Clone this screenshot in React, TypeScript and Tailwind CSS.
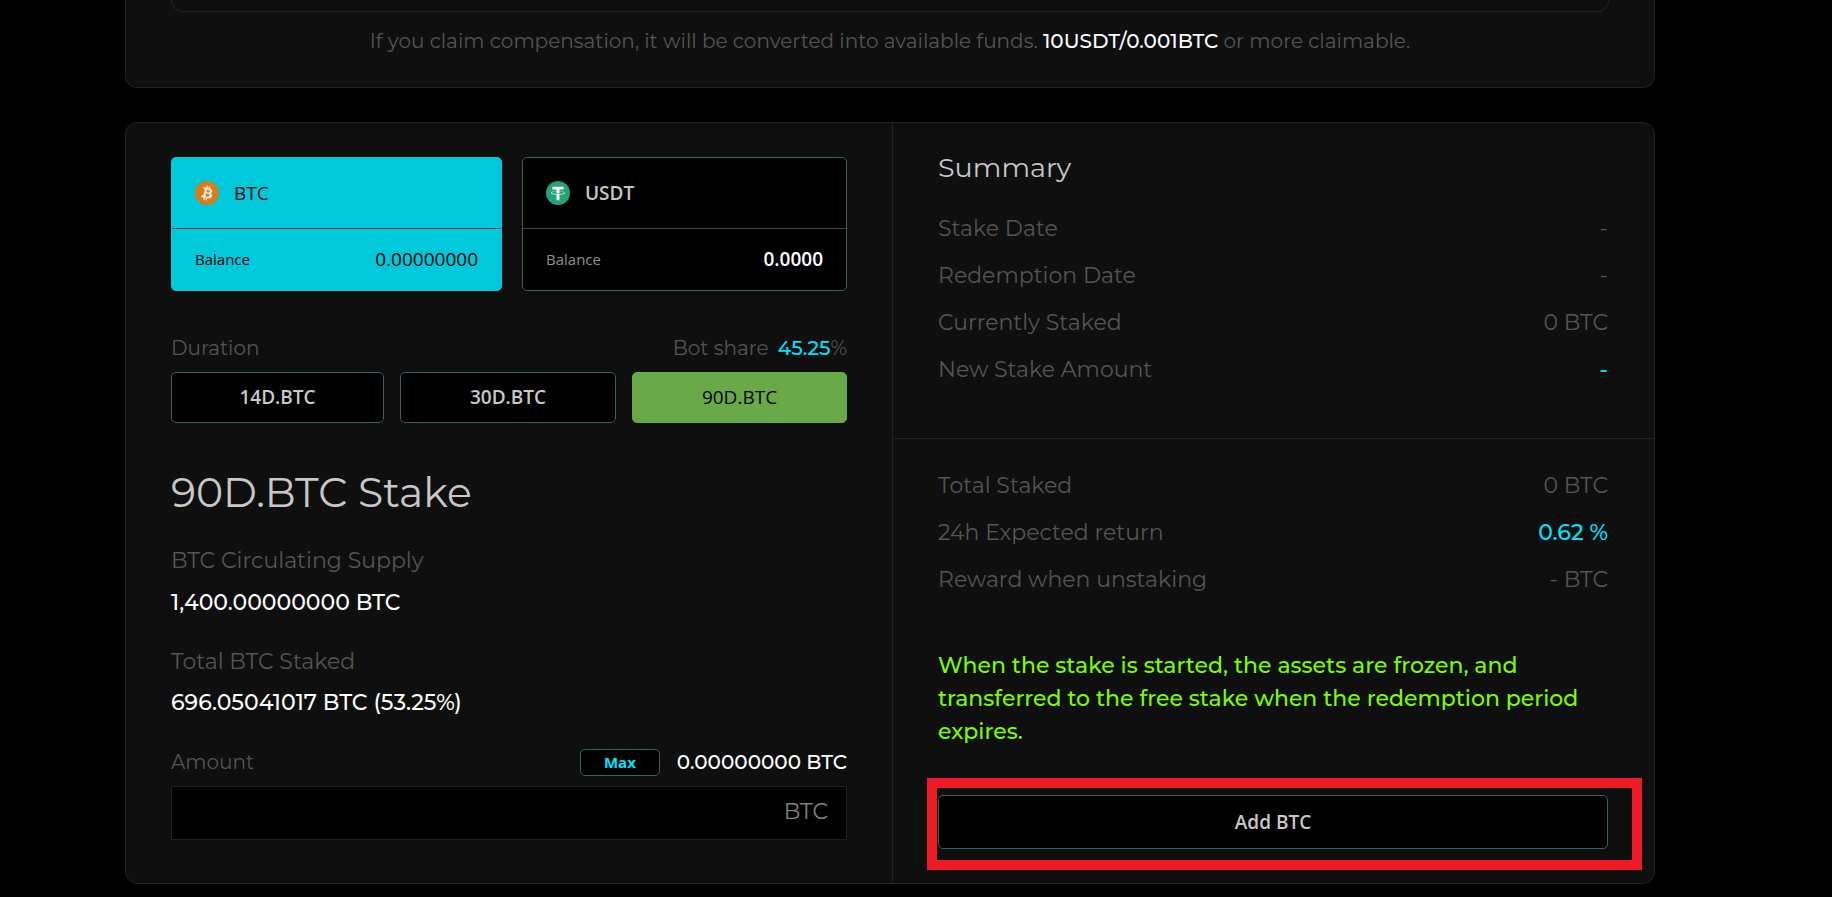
import React, { useState } from "react";
import clsx from "clsx";

interface Coin {
  symbol: string;
  balance: string;
  icon: React.ReactNode;
}

interface SummaryRowProps {
  label: string;
  value: string;
  highlight?: boolean;
}

const BtcIcon = () => (
  <svg viewBox="0 0 32 32" className="size-6 shrink-0" aria-hidden="true">
    <circle cx="16" cy="16" r="16" fill="#d57f1c" />
    <path
      fill="#ece5da"
      d="M23.19 14.02c.31-2.1-1.29-3.23-3.47-3.98l.71-2.84-1.73-.43-.69 2.77-1.38-.33.69-2.78-1.72-.43-.71 2.84-3.48-.87-.46 1.85s1.28.29 1.25.31c.7.18.83.64.8 1l-1.94 7.8c-.09.21-.3.53-.8.41.02.02-1.25-.32-1.25-.32l-.86 1.99 3.44.86-.72 2.87 1.73.43.71-2.84 1.38.36-.71 2.83 1.73.43.72-2.87c2.95.56 5.17.33 6.1-2.34.75-2.14-.04-3.38-1.59-4.19 1.13-.26 1.98-1 2.21-2.53zm-3.95 5.54c-.53 2.15-4.15.99-5.32.7l.95-3.81c1.17.29 4.93.87 4.37 3.11zm.54-5.57c-.49 1.95-3.5.96-4.48.72l.86-3.46c.98.24 4.12.7 3.62 2.74z"
    />
  </svg>
);

const UsdtIcon = () => (
  <svg viewBox="0 0 32 32" className="size-6 shrink-0" aria-hidden="true">
    <circle cx="16" cy="16" r="16" fill="#26a17b" />
    <path
      fill="#fff"
      d="M17.92 17.38v-.01c-.11.01-.68.04-1.94.04-1.01 0-1.72-.03-1.97-.04v.01c-3.89-.17-6.79-.85-6.79-1.66s2.9-1.48 6.79-1.66v2.65c.25.02.98.06 1.99.06 1.2 0 1.81-.05 1.92-.06v-2.65c3.88.18 6.78.86 6.78 1.66 0 .81-2.9 1.49-6.78 1.66zm0-3.59v-2.37h5.42V7.82H8.6v3.61h5.42v2.37c-4.4.2-7.71 1.07-7.71 2.12s3.31 1.91 7.71 2.12v7.58h3.9v-7.58c4.39-.2 7.69-1.07 7.69-2.12s-3.3-1.91-7.69-2.12z"
    />
  </svg>
);

const coins: Coin[] = [
  { symbol: "BTC", balance: "0.00000000", icon: <BtcIcon /> },
  { symbol: "USDT", balance: "0.0000", icon: <UsdtIcon /> },
];

const durations = ["14D.BTC", "30D.BTC", "90D.BTC"];

const stakeRows: SummaryRowProps[] = [
  { label: "Stake Date", value: "-" },
  { label: "Redemption Date", value: "-" },
  { label: "Currently Staked", value: "0 BTC" },
  { label: "New Stake Amount", value: "-", highlight: true },
];

const totalRows: SummaryRowProps[] = [
  { label: "Total Staked", value: "0 BTC" },
  { label: "24h Expected return", value: "0.62 %", highlight: true },
  { label: "Reward when unstaking", value: "- BTC" },
];

const SummaryRow: React.FC<SummaryRowProps> = ({ label, value, highlight }) => (
  <div className="flex justify-between text-[22px] leading-[47px]">
    <dt>{label}</dt>
    <dd className={clsx(highlight && "font-medium text-[#00e5ff]")}>{value}</dd>
  </div>
);

export default function App() {
  const [coin, setCoin] = useState("BTC");
  const [duration, setDuration] = useState("90D.BTC");
  const [amount, setAmount] = useState("");

  return (
    <div className="min-h-screen bg-black pl-[125px] pr-[177px] pb-[13px] font-['Montserrat','Inter',sans-serif] text-[#555]">
      {/* Compensation */}
      <section className="rounded-b-xl border border-t-0 border-[#212121] bg-[#0f0f0f] px-[45px] pb-[30px]">
        <div className="h-3 rounded-b-xl border border-t-0 border-[#212121]" />
        <p className="mt-[13px] text-center text-xl leading-8">
          If you claim compensation, it will be converted into available funds.{" "}
          <strong className="font-medium text-white">10USDT/0.001BTC</strong> or more claimable.
        </p>
      </section>

      <main className="mt-[34px] grid grid-cols-[767fr_761fr] rounded-xl border border-[#212121] bg-[#0f0f0f]">
        {/* Stake form */}
        <section className="border-r border-[#212121] px-[45px] pt-[34px] pb-[43px]">
          <div className="grid grid-cols-[331fr_325fr] gap-5 font-['Segoe_UI','Open_Sans',sans-serif]">
            {coins.map(({ symbol, balance, icon }) => {
              const active = coin === symbol;
              return (
                <button
                  key={symbol}
                  type="button"
                  onClick={() => setCoin(symbol)}
                  className={clsx(
                    "rounded-[5px] border text-left",
                    active ? "border-[#00c9db] bg-[#00c9db] text-black" : "border-[#366167] bg-black text-[#c8c8c8]"
                  )}
                >
                  <span
                    className={clsx(
                      "flex h-[71px] items-center gap-[15px] border-b border-[#444] px-[23px] text-[19px]",
                      active ? "font-medium" : "font-semibold"
                    )}
                  >
                    {icon}
                    {symbol}
                  </span>
                  <span className="flex h-[61px] items-center justify-between px-[23px]">
                    <span className={clsx("text-[15px] font-medium", !active && "text-[#909090]")}>Balance</span>
                    <span className={clsx("text-[19px]", active ? "font-medium" : "font-semibold text-white")}>
                      {balance}
                    </span>
                  </span>
                </button>
              );
            })}
          </div>

          <div className="mt-[41px] flex justify-between text-xl leading-8">
            <span>Duration</span>
            <span>
              Bot share <span className="ml-1 font-medium text-[#00e5ff]">45.25</span>%
            </span>
          </div>
          <div className="mt-2 grid grid-cols-[213fr_216fr_215fr] gap-4 font-['Segoe_UI','Open_Sans',sans-serif] text-[19px]">
            {durations.map((item) => (
              <button
                key={item}
                type="button"
                onClick={() => setDuration(item)}
                className={clsx(
                  "h-[51px] rounded-[5px] border",
                  duration === item
                    ? "border-[#69a948] bg-[#69a948] font-medium text-black"
                    : "border-[#366167] bg-black font-semibold text-[#c8c8c8]"
                )}
              >
                {item}
              </button>
            ))}
          </div>

          <h1 className="mt-[45px] text-[41px] leading-12 text-[#c8c8c8]">{duration} Stake</h1>

          <dl className="text-[22px] leading-8">
            <dt className="mt-[29px]">BTC Circulating Supply</dt>
            <dd className="mt-[10px] font-medium text-white">1,400.00000000 BTC</dd>
            <dt className="mt-[27px]">Total BTC Staked</dt>
            <dd className="mt-[9px] font-medium text-white">696.05041017 BTC (53.25%)</dd>
          </dl>

          <div className="mt-[27px] flex items-center text-xl leading-8">
            <label htmlFor="amount" className="mr-auto">
              Amount
            </label>
            <button
              type="button"
              onClick={() => setAmount("0.00000000")}
              className="mr-[17px] h-[27px] w-20 rounded-[5px] border border-[#366167] bg-black font-['Segoe_UI','Open_Sans',sans-serif] text-[15px] font-bold leading-none text-[#00e5ff]"
            >
              Max
            </button>
            <span className="font-medium text-white">0.00000000 BTC</span>
          </div>
          <div className="mt-2 flex h-[54px] items-center border border-[#212121] bg-black pr-[18px] text-[22px]">
            <input
              id="amount"
              type="text"
              value={amount}
              onChange={(e) => setAmount(e.target.value)}
              className="h-full min-w-0 flex-1 bg-transparent px-4 text-white outline-none"
            />
            <span className="pb-1 text-[#808080]">BTC</span>
          </div>
        </section>

        {/* Summary */}
        <section>
          <div className="border-b border-[#212121] pt-[27px] pr-[46px] pb-[45px] pl-[45px]">
            <h2 className="text-[27px] leading-9 text-[#c8c8c8]">Summary</h2>
            <dl className="mt-[19px]">
              {stakeRows.map((row) => (
                <SummaryRow key={row.label} {...row} />
              ))}
            </dl>
          </div>
          <div className="pt-[23px] pr-[46px] pb-[34px] pl-[45px]">
            <dl>
              {totalRows.map((row) => (
                <SummaryRow key={row.label} {...row} />
              ))}
            </dl>
            <p className="mt-[46px] text-[22px] font-medium leading-[33px] text-[#7cfc00]">
              When the stake is started, the assets are frozen, and transferred to the free stake when the redemption
              period expires.
            </p>
            <div className="relative mt-[47px]">
              <button
                type="button"
                className="block h-[54px] w-full rounded-[5px] border border-[#366167] bg-black font-['Segoe_UI','Open_Sans',sans-serif] text-[19px] font-semibold text-[#c8c8c8]"
              >
                Add {coin}
              </button>
              <div className="pointer-events-none absolute -top-[17px] -right-[34px] -bottom-[21px] -left-[11px] border-10 border-[#ed1c24]" />
            </div>
          </div>
        </section>
      </main>
    </div>
  );
}
